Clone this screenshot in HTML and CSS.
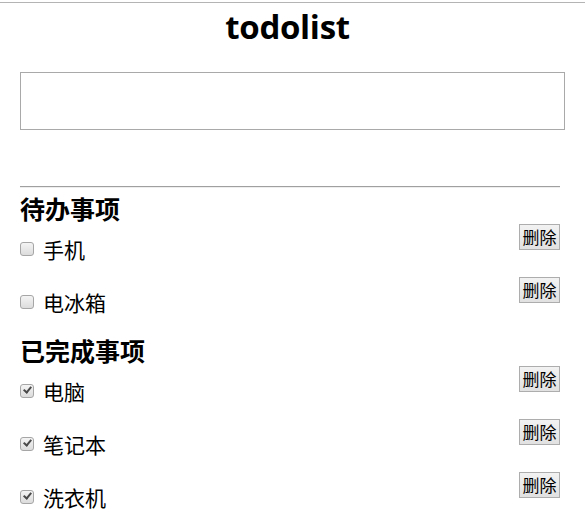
FILE: index.html
```html
<!DOCTYPE html>
<html lang="zh-CN">
<head>
<meta charset="utf-8">
<title>todolist</title>
<link rel="stylesheet" href="styles.css">
</head>
<body>
<div class="page">
  <h1 class="title">todolist</h1>
  <input class="new-todo" type="text">
  <hr class="divider">
  <h2 class="section">待办事项</h2>
  <ul class="list">
    <li class="item"><label class="label"><input class="check" type="checkbox"><span>手机</span></label><button class="del">删除</button></li>
    <li class="item"><label class="label"><input class="check" type="checkbox"><span>电冰箱</span></label><button class="del">删除</button></li>
  </ul>
  <h2 class="section">已完成事项</h2>
  <ul class="list">
    <li class="item"><label class="label"><input class="check" type="checkbox" checked><span>电脑</span></label><button class="del">删除</button></li>
    <li class="item"><label class="label"><input class="check" type="checkbox" checked><span>笔记本</span></label><button class="del">删除</button></li>
    <li class="item"><label class="label"><input class="check" type="checkbox" checked><span>洗衣机</span></label><button class="del">删除</button></li>
  </ul>
</div>
</body>
</html>
```
FILE: styles.css
```css
html, body {
  margin: 0;
  padding: 0;
  background: #fff;
}
body {
  font-family: "Noto Sans CJK SC", "Open Sans", sans-serif;
  color: #000;
}
.page {
  margin-top: 2px;
  border-top: 1px solid #b4b4b4;
  padding: 0 20px;
}
.title {
  margin: 0;
  padding-top: 4px;
  height: 64px;
  font-family: "Open Sans", "Noto Sans CJK SC", sans-serif;
  font-size: 33px;
  font-weight: 700;
  line-height: 40px;
  text-align: center;
  letter-spacing: -0.3px;
  padding-right: 10px;
}
.new-todo {
  display: block;
  box-sizing: border-box;
  width: 545px;
  height: 58px;
  margin: 1px 0 0;
  border: 1px solid #a9a9a9;
  padding: 0 4px;
  outline: none;
  font-size: 16px;
}
.divider {
  width: 540px;
  margin: 56px 0 0;
  border: 0;
  border-top: 1px solid #a0a0a0;
  border-bottom: 1px solid #eeeeee;
  height: 0;
}
.section {
  margin: 5px 0 0;
  font-size: 25px;
  font-weight: 700;
  line-height: 30px;
}
.list {
  list-style: none;
  margin: 1px 0 0;
  padding: 0;
  width: 540px;
}
.item {
  display: flex;
  justify-content: space-between;
  align-items: flex-start;
  height: 53px;
}
.label {
  display: flex;
  align-items: center;
  margin-top: 12px;
  height: 26px;
  font-size: 21px;
  line-height: 26px;
}
.check {
  appearance: none;
  -webkit-appearance: none;
  position: relative;
  box-sizing: border-box;
  width: 14px;
  height: 14px;
  margin: 0 9px 0 0;
  border: 1px solid #a6a6a6;
  border-radius: 3px;
  background: linear-gradient(#f4f4f4, #dcdcdc);
}
.check:checked::after {
  content: "";
  position: absolute;
  left: 3.5px;
  top: 0px;
  width: 3px;
  height: 6px;
  border-right: 2.5px solid #4a4a4a;
  border-bottom: 2.5px solid #4a4a4a;
  transform: rotate(40deg);
}
.del {
  box-sizing: border-box;
  height: 26px;
  width: 41px;
  padding: 0;
  border: 1px solid #adadad;
  border-radius: 0;
  background: linear-gradient(#f2f2f2, #e1e1e1);
  font-family: "Noto Sans CJK SC", sans-serif;
  font-size: 17px;
  line-height: 22px;
  color: #000;
  margin-right: 0;
}
```
